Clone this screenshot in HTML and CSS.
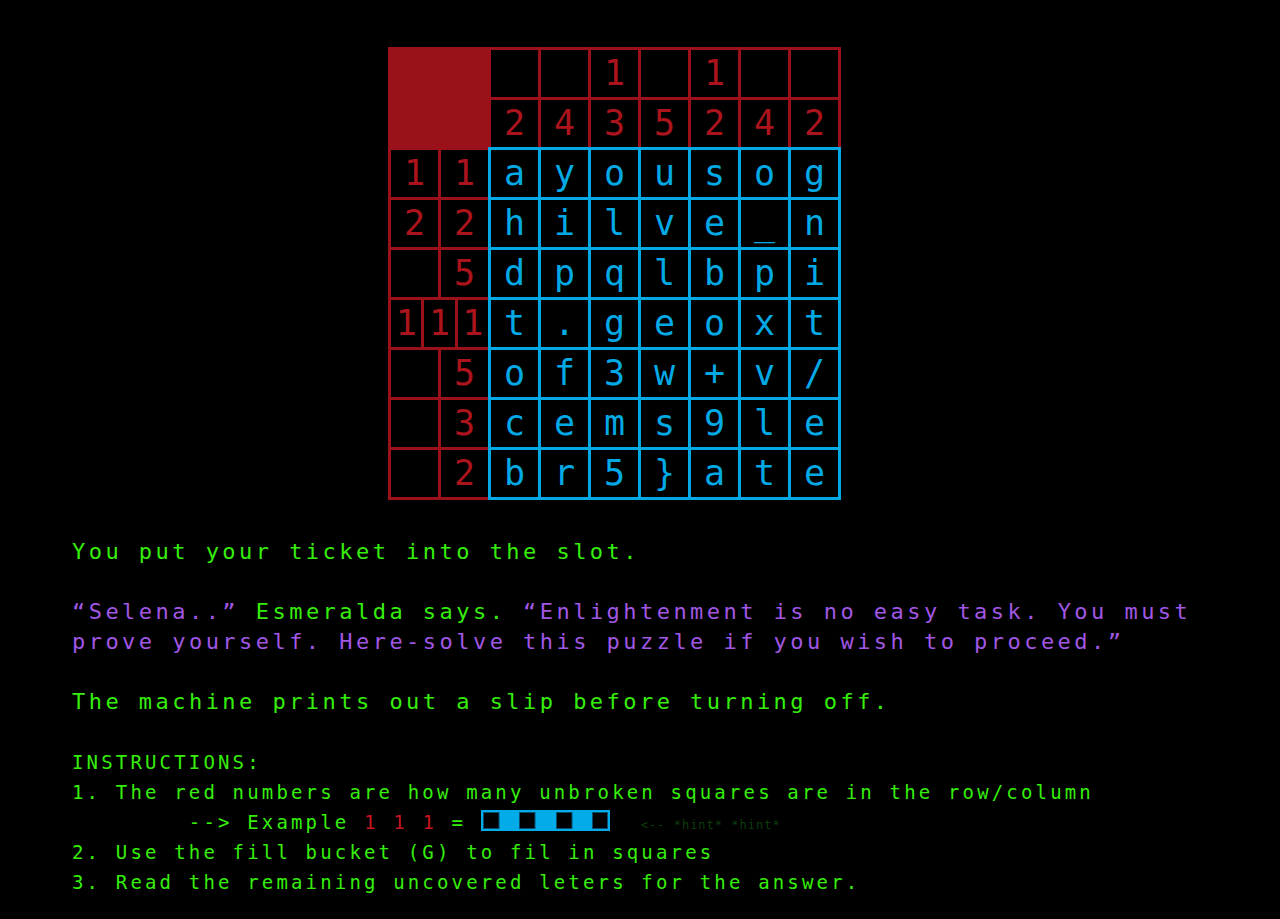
FILE: index.html
```html
<!DOCTYPE html>
<html>
<head>
<meta charset="utf-8">
<title>Puzzle</title>
<link rel="stylesheet" href="styles.css">
</head>
<body>
<div class="page">
  <div class="board-wrap">
    <div class="board">
      <div class="corner"></div>
      <div class="cell"></div><div class="cell"></div><div class="cell">1</div><div class="cell"></div><div class="cell">1</div><div class="cell"></div><div class="cell"></div>
      <div class="cell">2</div><div class="cell">4</div><div class="cell">3</div><div class="cell">5</div><div class="cell">2</div><div class="cell">4</div><div class="cell">2</div>

      <div class="cell">1</div><div class="cell">1</div>
      <div class="cell b">a</div><div class="cell b">y</div><div class="cell b">o</div><div class="cell b">u</div><div class="cell b">s</div><div class="cell b">o</div><div class="cell b">g</div>

      <div class="cell">2</div><div class="cell">2</div>
      <div class="cell b">h</div><div class="cell b">i</div><div class="cell b">l</div><div class="cell b">v</div><div class="cell b">e</div><div class="cell b">_</div><div class="cell b">n</div>

      <div class="cell"></div><div class="cell">5</div>
      <div class="cell b">d</div><div class="cell b">p</div><div class="cell b">q</div><div class="cell b">l</div><div class="cell b">b</div><div class="cell b">p</div><div class="cell b">i</div>

      <div class="split"><div class="sc">1</div><div class="sc">1</div><div class="sc">1</div></div>
      <div class="cell b">t</div><div class="cell b">.</div><div class="cell b">g</div><div class="cell b">e</div><div class="cell b">o</div><div class="cell b">x</div><div class="cell b">t</div>

      <div class="cell"></div><div class="cell">5</div>
      <div class="cell b">o</div><div class="cell b">f</div><div class="cell b">3</div><div class="cell b">w</div><div class="cell b">+</div><div class="cell b">v</div><div class="cell b">/</div>

      <div class="cell"></div><div class="cell">3</div>
      <div class="cell b">c</div><div class="cell b">e</div><div class="cell b">m</div><div class="cell b">s</div><div class="cell b">9</div><div class="cell b">l</div><div class="cell b">e</div>

      <div class="cell"></div><div class="cell">2</div>
      <div class="cell b">b</div><div class="cell b">r</div><div class="cell b">5</div><div class="cell b">}</div><div class="cell b">a</div><div class="cell b">t</div><div class="cell b">e</div>
    </div>
  </div>

  <div class="story">
    <p>You put your ticket into the slot.</p>
    <p><span class="purple">“Selena..”</span> Esmeralda says. <span class="purple">“Enlightenment is no easy task. You must<br>prove yourself. Here-solve this puzzle if you wish to proceed.”</span></p>
    <p>The machine prints out a slip before turning off.</p>
  </div>

  <div class="instr">
    <div class="line">INSTRUCTIONS:</div>
    <div class="line">1. The red numbers are how many unbroken squares are in the row/column</div>
    <div class="line pre">        --&gt; Example <span class="red">1 1 1</span> = <svg class="example" width="129" height="21" viewBox="0 0 129 21"><rect x="0" y="0" width="129" height="21" fill="#02ace8"/><rect x="2.5" y="2.5" width="15.5" height="16" fill="#000" stroke="#0a4d70" stroke-width="1"/><rect x="38.5" y="2.5" width="15.5" height="16" fill="#000" stroke="#0a4d70" stroke-width="1"/><rect x="75.5" y="2.5" width="15.5" height="16" fill="#000" stroke="#0a4d70" stroke-width="1"/><rect x="111.5" y="2.5" width="15" height="16" fill="#000" stroke="#0a4d70" stroke-width="1"/></svg><span class="hint">&lt;-- *hint* *hint*</span></div>
    <div class="line">2. Use the fill bucket (G) to fil in squares</div>
    <div class="line">3. Read the remaining uncovered leters for the answer.</div>
  </div>
</div>
</body>
</html>
```

FILE: styles.css
```css
html, body {
  margin: 0;
  padding: 0;
  background: #000;
}

.page {
  padding: 47px 72px 0 72px;
  font-family: "DejaVu Sans Mono", "Liberation Mono", monospace;
}

.board-wrap {
  width: 1085px;
  display: flex;
  justify-content: center;
}

.board {
  display: grid;
  grid-template-columns: repeat(9, 50px);
  grid-template-rows: repeat(9, 50px);
  padding: 0 3px 3px 0;
}

.corner {
  grid-column: span 2;
  grid-row: span 2;
  width: 103px;
  height: 103px;
  box-sizing: border-box;
  background: #9b111a;
}

.cell {
  width: 53px;
  height: 53px;
  box-sizing: border-box;
  border: 3px solid #9b111a;
  display: flex;
  align-items: center;
  justify-content: center;
  color: #ab141d;
  font-size: 35px;
  line-height: 1;
}

.cell.b {
  border-color: #03a9e4;
  color: #03a9e4;
  z-index: 1;
}

.split {
  grid-column: span 2;
  width: 103px;
  height: 53px;
  display: flex;
}

.sc {
  flex: 1 1 0;
  box-sizing: border-box;
  border: 3px solid #9b111a;
  margin-left: -3px;
  display: flex;
  align-items: center;
  justify-content: center;
  color: #ab141d;
  font-size: 35px;
  line-height: 1;
}

.sc:first-child {
  margin-left: 0;
}

.story {
  margin-top: 37px;
  color: #36ee0c;
  font-size: 22px;
  line-height: 30px;
  letter-spacing: 3.46px;
}

.story p {
  margin: 0 0 30px 0;
}

.purple {
  color: #a157e4;
}

.instr {
  color: #36ee0c;
  font-size: 19px;
  line-height: 30px;
  letter-spacing: 3.16px;
}

.line {
  white-space: nowrap;
  height: 30px;
}

.pre {
  white-space: pre;
}

.red {
  color: #c5141e;
}

.example {
  display: inline-block;
  vertical-align: -2px;
}

.hint {
  margin-left: 31px;
  font-size: 12px;
  line-height: 12px;
  letter-spacing: 1px;
  color: #0d3d0d;
}
```
